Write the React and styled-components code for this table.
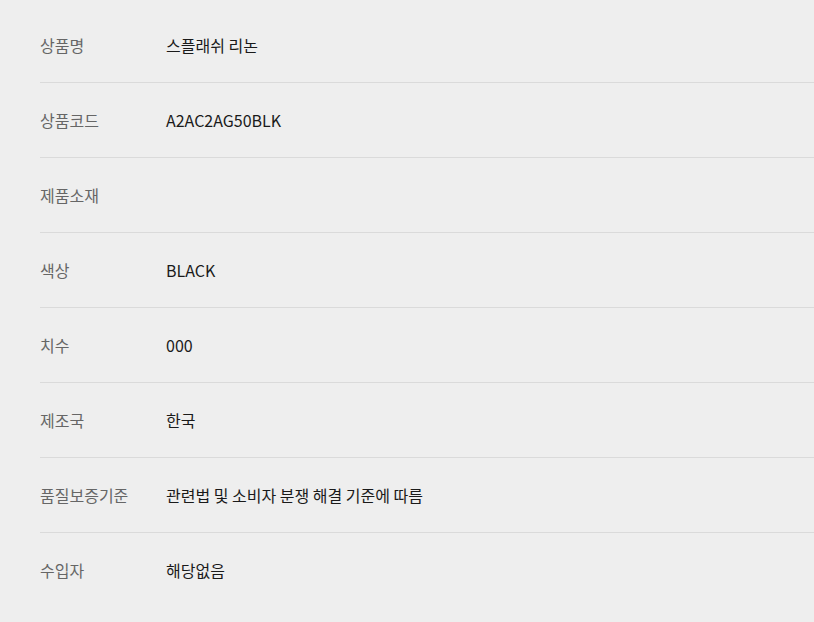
import styled, { createGlobalStyle } from "styled-components";

const GlobalStyle = createGlobalStyle`
  html, body {
    margin: 0;
    padding: 0;
    background: #eeeeee;
  }
  body {
    font-family: "Noto Sans CJK KR", "Noto Sans", sans-serif;
  }
`;

const Page = styled.div`
  padding: 8px 0 0 40px;
  min-height: 622px;
  box-sizing: border-box;
`;

const InfoTable = styled.dl`
  margin: 0;
`;

const Row = styled.div`
  display: flex;
  align-items: center;
  height: 74px;
  border-bottom: 1px solid #dadada;
  &:last-child {
    border-bottom: none;
  }
`;

const Label = styled.dt`
  width: 126px;
  flex-shrink: 0;
  font-size: 16px;
  color: #666666;
`;

const Value = styled.dd`
  margin: 0;
  font-size: 16px;
  color: #1a1a1a;
`;

const items = [
  ["상품명", "스플래쉬 리논"],
  ["상품코드", "A2AC2AG50BLK"],
  ["제품소재", ""],
  ["색상", "BLACK"],
  ["치수", "000"],
  ["제조국", "한국"],
  ["품질보증기준", "관련법 및 소비자 분쟁 해결 기준에 따름"],
  ["수입자", "해당없음"],
];

export default function App() {
  return (
    <>
      <GlobalStyle />
      <Page>
        <InfoTable>
          {items.map(([label, value]) => (
            <Row key={label}>
              <Label>{label}</Label>
              <Value>{value}</Value>
            </Row>
          ))}
        </InfoTable>
      </Page>
    </>
  );
}
